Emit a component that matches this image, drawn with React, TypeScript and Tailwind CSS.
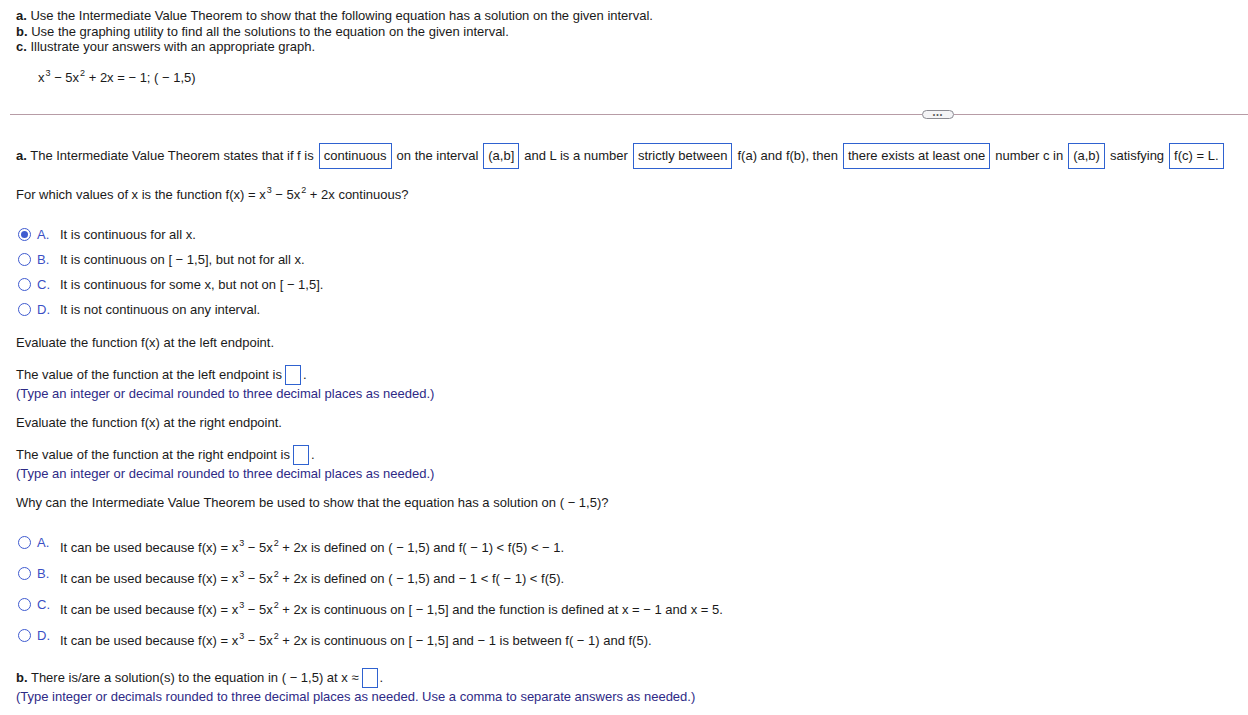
import React from 'react';

const FONT = { fontFamily: '"Liberation Sans", Arial, sans-serif' };

function Sup({ children }: { children: React.ReactNode }) {
  return <sup className="text-[9px] -top-[6px] ml-[1px]">{children}</sup>;
}

function Fx() {
  return (
    <>
      f(x) = x<Sup>3</Sup> − 5x<Sup>2</Sup> + 2x
    </>
  );
}

function Box({ children }: { children: React.ReactNode }) {
  return (
    <span className="inline-flex items-center h-[26px] border border-[#2f62d0] px-[4px] mx-[5px]">
      {children}
    </span>
  );
}

function Blank() {
  return <span className="inline-block w-[16px] h-[20px] border border-[#2f62d0] ml-[3px] mr-[2px]" />;
}

function Radio({ checked }: { checked?: boolean }) {
  return (
    <span className="inline-flex w-[13px] h-[13px] rounded-full border border-[#3f5bd0] items-center justify-center shrink-0">
      {checked && <span className="w-[7px] h-[7px] rounded-full bg-[#3f5bd0]" />}
    </span>
  );
}

const firstChoices = [
  { k: 'A.', t: <>It is continuous for all x.</>, checked: true },
  { k: 'B.', t: <>It is continuous on [ − 1,5], but not for all x.</> },
  { k: 'C.', t: <>It is continuous for some x, but not on [ − 1,5].</> },
  { k: 'D.', t: <>It is not continuous on any interval.</> },
];

const secondChoices = [
  { k: 'A.', t: <>It can be used because <Fx /> is defined on ( − 1,5) and f( − 1) &lt; f(5) &lt;  − 1.</> },
  { k: 'B.', t: <>It can be used because <Fx /> is defined on ( − 1,5) and  − 1 &lt; f( − 1) &lt; f(5).</> },
  { k: 'C.', t: <>It can be used because <Fx /> is continuous on [ − 1,5] and the function is defined at x =  − 1 and x = 5.</> },
  { k: 'D.', t: <>It can be used because <Fx /> is continuous on [ − 1,5] and  − 1 is between f( − 1) and f(5).</> },
];

export default function App() {
  return (
    <div className="min-h-screen bg-white text-[#1a1a1a] text-[13px] leading-[16px] whitespace-nowrap" style={FONT}>
      {/* Question header */}
      <div className="pl-[16px] pt-[8px] leading-[15.5px]">
        <p><b>a.</b> Use the Intermediate Value Theorem to show that the following equation has a solution on the given interval.</p>
        <p><b>b.</b> Use the graphing utility to find all the solutions to the equation on the given interval.</p>
        <p><b>c.</b> Illustrate your answers with an appropriate graph.</p>
        <p className="pl-[22px] mt-[15px] h-[16px] leading-[16px]">
          x<Sup>3</Sup> − 5x<Sup>2</Sup> + 2x =  − 1; ( − 1,5)
        </p>
      </div>

      {/* Divider */}
      <div className="flex items-center h-[10px] pl-[10px] mt-[24px]">
        <div className="h-px bg-[#b79ca6] w-[912px]" />
        <span className="flex items-center justify-center w-[32px] h-[9px] rounded-full border border-[#8a8a92] bg-[#f4f4f6] text-[7px] leading-none text-[#555] tracking-[1px]">
          •••
        </span>
        <div className="h-px bg-[#b79ca6] flex-1" />
      </div>

      {/* Part a */}
      <div className="pl-[16px]">
        <div className="flex items-center h-[26px] mt-[23px]">
          <span><b>a.</b> The Intermediate Value Theorem states that if f is</span>
          <Box>continuous</Box>
          <span>on the interval</span>
          <Box>(a,b]</Box>
          <span>and L is a number</span>
          <Box>strictly between</Box>
          <span>f(a) and f(b), then</span>
          <Box>there exists at least one</Box>
          <span>number c in</span>
          <Box>(a,b)</Box>
          <span>satisfying</span>
          <Box>f(c) = L.</Box>
        </div>

        <p className="h-[16px] mt-[18px]">For which values of x is the function <Fx /> continuous?</p>

        <div className="mt-[19.5px] flex flex-col">
          {firstChoices.map((c) => (
            <div key={c.k} className="flex items-center h-[25px]">
              <span className="pl-[2px] flex"><Radio checked={c.checked} /></span>
              <span className="text-[#3b4fc4] w-[29px] pl-[6px]">{c.k}</span>
              <span>{c.t}</span>
            </div>
          ))}
        </div>

        <p className="h-[16px] mt-[12.5px]">Evaluate the function f(x) at the left endpoint.</p>
        <div className="flex items-center h-[20px] mt-[14px]">
          <span>The value of the function at the left endpoint is</span>
          <Blank />
          <span>.</span>
        </div>
        <p className="h-[16px] mt-[1px] text-[#2e2a86]">(Type an integer or decimal rounded to three decimal places as needed.)</p>

        <p className="h-[16px] mt-[13px]">Evaluate the function f(x) at the right endpoint.</p>
        <div className="flex items-center h-[20px] mt-[14px]">
          <span>The value of the function at the right endpoint is</span>
          <Blank />
          <span>.</span>
        </div>
        <p className="h-[16px] mt-[1px] text-[#2e2a86]">(Type an integer or decimal rounded to three decimal places as needed.)</p>

        <p className="h-[16px] mt-[13px]">Why can the Intermediate Value Theorem be used to show that the equation has a solution on ( − 1,5)?</p>

        <div className="mt-[21.5px] flex flex-col">
          {secondChoices.map((c) => (
            <div key={c.k} className="flex items-center h-[31px]">
              <span className="pl-[2px] flex -translate-y-[5px]"><Radio /></span>
              <span className="text-[#3b4fc4] w-[29px] pl-[6px] -translate-y-[5px]">{c.k}</span>
              <span>{c.t}</span>
            </div>
          ))}
        </div>

        <div className="flex items-center h-[20px] mt-[11.5px]">
          <span><b>b.</b> There is/are a solution(s) to the equation in ( − 1,5) at x ≈</span>
          <Blank />
          <span>.</span>
        </div>
        <p className="h-[16px] mt-[1px] text-[#2e2a86]">(Type integer or decimals rounded to three decimal places as needed. Use a comma to separate answers as needed.)</p>
      </div>
    </div>
  );
}
